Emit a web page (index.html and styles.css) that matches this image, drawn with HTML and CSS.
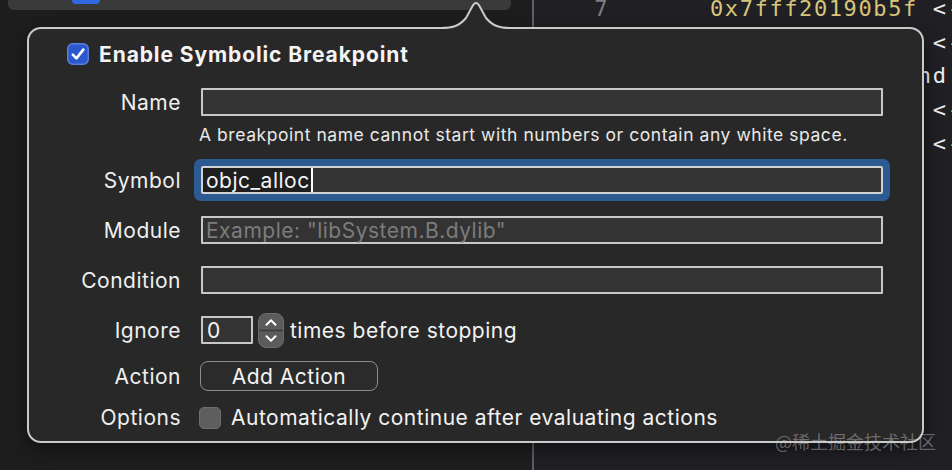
FILE: index.html
```html
<!DOCTYPE html>
<html lang="en">
<head>
<meta charset="utf-8">
<title>Symbolic Breakpoint</title>
<link rel="stylesheet" href="styles.css">
</head>
<body>
<div class="app">
  <div class="nav-pane">
    <div class="topbar"><div class="topbar-chip"></div></div>
  </div>
  <div class="divider"></div>
  <div class="code-pane">
    <div class="gutter">7</div>
    <div class="code"><div>0x7fff20190b5f <span class="op">&lt;</span><span class="arrow">-</span></div><div>               <span class="op">&lt;</span><span class="arrow">-</span></div><div class="plain">              nd</div><div>               <span class="op">&lt;</span><span class="arrow">-</span></div><div>               <span class="op">&lt;</span><span class="arrow">-</span></div></div>
  </div>
</div>

<svg class="popover-arrow" width="70" height="32" viewBox="0 0 70 32">
  <path d="M0 28 C12 28 18 26 25 18 L31 7 Q35 -1 39 7 L45 18 C52 26 58 28 70 28 L70 31 L0 31 Z" fill="#282828"/>
  <path d="M0 28 C12 28 18 26 25 18 L31 7 Q35 -1 39 7 L45 18 C52 26 58 28 70 28" fill="none" stroke="#cacaca" stroke-width="2"/>
</svg>

<div class="popover">
  <div class="title-row">
    <span class="checkbox checked">
      <svg width="22" height="22" viewBox="0 0 22 22"><rect x="0.75" y="0.75" width="20.5" height="20.5" rx="5" fill="#2b58cc" stroke="#5a80dc" stroke-width="1.5"/><path d="M5.8 11.6 L9.4 15.4 L16.3 6.6" fill="none" stroke="#fff" stroke-width="2.6" stroke-linecap="round" stroke-linejoin="round"/></svg>
    </span>
    <span class="title">Enable Symbolic Breakpoint</span>
  </div>

  <div class="row row-name">
    <span class="label">Name</span>
    <div class="field"></div>
  </div>
  <div class="row row-hint">
    <span></span>
    <p class="hint">A breakpoint name cannot start with numbers or contain any white space.</p>
  </div>
  <div class="row row-field">
    <span class="label">Symbol</span>
    <div class="field focused"><span class="selection">objc_alloc</span></div>
  </div>
  <div class="row row-field">
    <span class="label">Module</span>
    <div class="field"><span class="placeholder">Example: "libSystem.B.dylib"</span></div>
  </div>
  <div class="row row-field">
    <span class="label">Condition</span>
    <div class="field"></div>
  </div>
  <div class="row row-field">
    <span class="label">Ignore</span>
    <div class="ignore">
      <div class="field small"><span class="value">0</span></div>
      <svg class="stepper" width="26" height="35" viewBox="0 0 26 35"><rect x="0.5" y="0.5" width="25" height="34" rx="7.5" fill="#5b5b5b" stroke="#6b6b6b"/><line x1="1" y1="17.5" x2="25" y2="17.5" stroke="#3b3b3b" stroke-width="1.5"/><path d="M8.5 11.8 L13 7.3 L17.5 11.8" fill="none" stroke="#fff" stroke-width="2" stroke-linecap="round" stroke-linejoin="round"/><path d="M8.5 23.2 L13 27.7 L17.5 23.2" fill="none" stroke="#fff" stroke-width="2" stroke-linecap="round" stroke-linejoin="round"/></svg>
      <span class="after">times before stopping</span>
    </div>
  </div>
  <div class="row row-action">
    <span class="label">Action</span>
    <div><button class="btn" type="button">Add Action</button></div>
  </div>
  <div class="row row-options">
    <span class="label">Options</span>
    <div class="option">
      <span class="checkbox unchecked"></span>
      <span class="option-text">Automatically continue after evaluating actions</span>
    </div>
  </div>
</div>

<div class="watermark">@稀土掘金技术社区</div>
</body>
</html>
```
FILE: styles.css
```css
* { box-sizing: border-box; }
html, body { margin: 0; padding: 0; }
body {
  width: 952px;
  height: 470px;
  overflow: hidden;
  position: relative;
  background: #1e1e1e;
  color: #f2f2f2;
  font-family: Inter, "Noto Sans", sans-serif;
}

.app { display: flex; height: 470px; }

.nav-pane { width: 532px; flex: none; background: #1d1d1d; }
.topbar {
  margin: 0 21px 0 8px;
  height: 10px;
  background: #3a3a3a;
  border-radius: 0 0 6px 6px;
  padding-left: 64px;
}
.topbar-chip {
  width: 28px;
  height: 4px;
  background: #2f6ae0;
  border-radius: 0 0 5px 5px;
}
.divider { width: 2px; flex: none; background: #5f5f5f; }

.code-pane {
  flex: 1;
  min-width: 0;
  overflow: hidden;
  display: flex;
  align-items: flex-start;
  background: #1f1f24;
  font-family: "DejaVu Sans Mono", monospace;
  font-size: 22px;
  line-height: 33.7px;
  letter-spacing: 1.6px;
}
.gutter {
  width: 75px;
  flex: none;
  margin-top: -8px;
  text-align: right;
  color: #7d7d80;
}
.code {
  flex: none;
  margin-left: 101px;
  margin-top: -8px;
  white-space: pre;
  color: #d6c57a;
}
.code .op, .code .plain { color: #ececec; }
.code .arrow { color: #d6c57a; }

.popover-arrow { position: absolute; left: 441px; top: 0; z-index: 2; }

.popover {
  position: absolute;
  left: 27px;
  top: 27px;
  width: 897px;
  height: 416px;
  background: #282828;
  border: 2px solid #cacaca;
  border-radius: 14px;
  padding: 14px 39px 0 0;
  box-shadow: 0 6px 16px rgba(0, 0, 0, 0.45);
  z-index: 1;
}

.title-row {
  display: flex;
  align-items: center;
  height: 22px;
  padding-left: 38px;
}
.checkbox { display: block; width: 22px; height: 22px; flex: none; }
.checkbox svg { display: block; }
.title {
  margin-left: 10px;
  font-size: 21px;
  font-weight: 700;
  letter-spacing: 0.9px;
  color: #f4f4f4;
}

.row {
  display: grid;
  grid-template-columns: 152px 682px;
  column-gap: 20px;
  align-items: center;
  height: 28px;
}
.label { text-align: right; font-size: 21px; letter-spacing: 0.5px; color: #efefef; }

.row-name { margin-top: 23px; }
.row-hint { margin-top: 9px; height: 20px; }
.row-field { margin-top: 22px; }
.row-hint + .row-field { margin-top: 21px; }
.row-action { margin-top: 17px; height: 30px; }
.row-options { margin-top: 14px; height: 22px; }

.hint {
  margin: 0 0 0 -2px;
  font-size: 17.5px;
  letter-spacing: 0.55px;
  line-height: 20px;
  white-space: nowrap;
  color: #e8e8e8;
}

.field {
  height: 28px;
  border: 2px solid #c8c8c8;
  border-radius: 1px;
  background: #333333;
  display: flex;
  align-items: center;
  font-size: 21px;
  letter-spacing: 0.5px;
  color: #f4f4f4;
}
.field.focused {
  border-radius: 2px;
  box-shadow: 0 0 0 7px #2d5a93;
  border-color: #d2d2d2;
}
.selection {
  height: 100%;
  display: flex;
  align-items: center;
  padding: 0 1px 0 3px;
  background: #1e1e1e;
  border-right: 2px solid #ffffff;
}
.placeholder { padding-left: 3px; color: #7c7c7c; }

.ignore { display: flex; align-items: center; height: 28px; }
.field.small { width: 52px; flex: none; }
.value { padding-left: 4px; }
.stepper { display: block; margin-left: 5px; flex: none; }
.after { margin-left: 6px; font-size: 21px; letter-spacing: 0.5px; color: #f2f2f2; }

.btn {
  margin-left: -1px;
  width: 178px;
  height: 30px;
  border: 1.5px solid #8d8d8d;
  border-radius: 8px;
  background: #2b2b2b;
  color: #f4f4f4;
  font-family: Inter, "Noto Sans", sans-serif;
  font-size: 21px;
  letter-spacing: 0.5px;
  padding: 0;
  display: flex;
  align-items: center;
  justify-content: center;
}

.option { display: flex; align-items: center; margin-left: -2px; }
.checkbox.unchecked {
  background: #5e5e5e;
  border: 1px solid #6e6e6e;
  border-radius: 5px;
}
.option-text { margin-left: 10px; font-size: 21px; letter-spacing: 0.5px; color: #f2f2f2; }

.watermark {
  position: absolute;
  left: 775px;
  top: 430px;
  z-index: 3;
  font-family: "Noto Sans CJK SC", sans-serif;
  font-size: 18px;
  line-height: 22px;
  color: rgba(205, 205, 205, 0.42);
}
```
